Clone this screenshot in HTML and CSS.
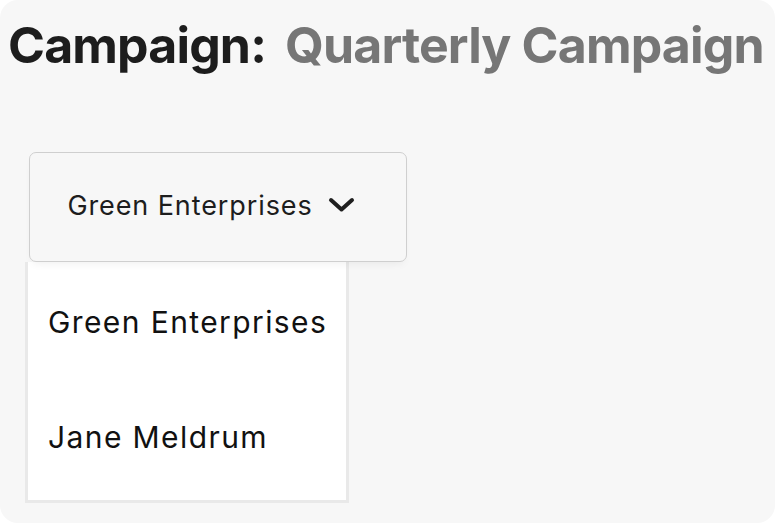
FILE: index.html
```html
<!DOCTYPE html>
<html>
<head>
<meta charset="utf-8">
<link rel="stylesheet" href="styles.css">
</head>
<body>
<div class="panel">
  <h1 class="title"><span class="label">Campaign:</span> <span class="name">Quarterly Campaign</span></h1>
  <div class="select">
    <button class="trigger">
      <span>Green Enterprises</span>
      <svg class="chev" width="27" height="16" viewBox="0 0 27 16"><path d="M3 3 L13.5 12.5 L24 3" fill="none" stroke="#1f1f1f" stroke-width="4" stroke-linecap="round" stroke-linejoin="round"/></svg>
    </button>
    <ul class="menu">
      <li class="item">Green Enterprises</li>
      <li class="item">Jane Meldrum</li>
    </ul>
  </div>
</div>
</body>
</html>
```
FILE: styles.css
```css
html, body {
  margin: 0;
  padding: 0;
  background: #ffffff;
}
.panel {
  width: 775px;
  height: 523px;
  box-sizing: border-box;
  background: #f7f7f7;
  border-radius: 18px;
  padding: 16px 0 0 8px;
  font-family: Inter, "Liberation Sans", sans-serif;
  color: #1d1d1d;
  overflow: hidden;
}
.title {
  margin: 0;
  font-size: 50px;
  font-weight: 700;
  line-height: 58px;
  letter-spacing: -0.85px;
  white-space: nowrap;
}
.name {
  color: #767676;
  margin-left: 8px;
}
.select {
  margin: 78px 0 0 21px;
  display: flex;
  flex-direction: column;
  align-items: flex-start;
  position: relative;
}
.trigger {
  position: relative;
  z-index: 1;
  width: 378px;
  height: 110px;
  box-sizing: border-box;
  border: 1px solid #cfcfcf;
  border-radius: 7px;
  background: #f7f7f7;
  box-shadow: 0 5px 10px -4px rgba(0,0,0,0.07);
  display: flex;
  align-items: center;
  justify-content: center;
  gap: 15px;
  font-family: inherit;
  font-size: 27px;
  letter-spacing: 0.9px;
  color: #1d1d1d;
  padding: 0 14px 4px 0;
}
.chev {
  display: block;
}
.menu {
  list-style: none;
  margin: 0 0 0 -4px;
  padding: 2px 0 0 0;
  width: 324px;
  height: 241px;
  box-sizing: border-box;
  background: #ffffff;
  border: 3px solid #e9e9e9;
  border-top: none;
}
.item {
  padding: 0 0 0 20px;
  height: 115px;
  display: flex;
  align-items: center;
  font-size: 30px;
  letter-spacing: 1.4px;
  color: #111;
}
```
